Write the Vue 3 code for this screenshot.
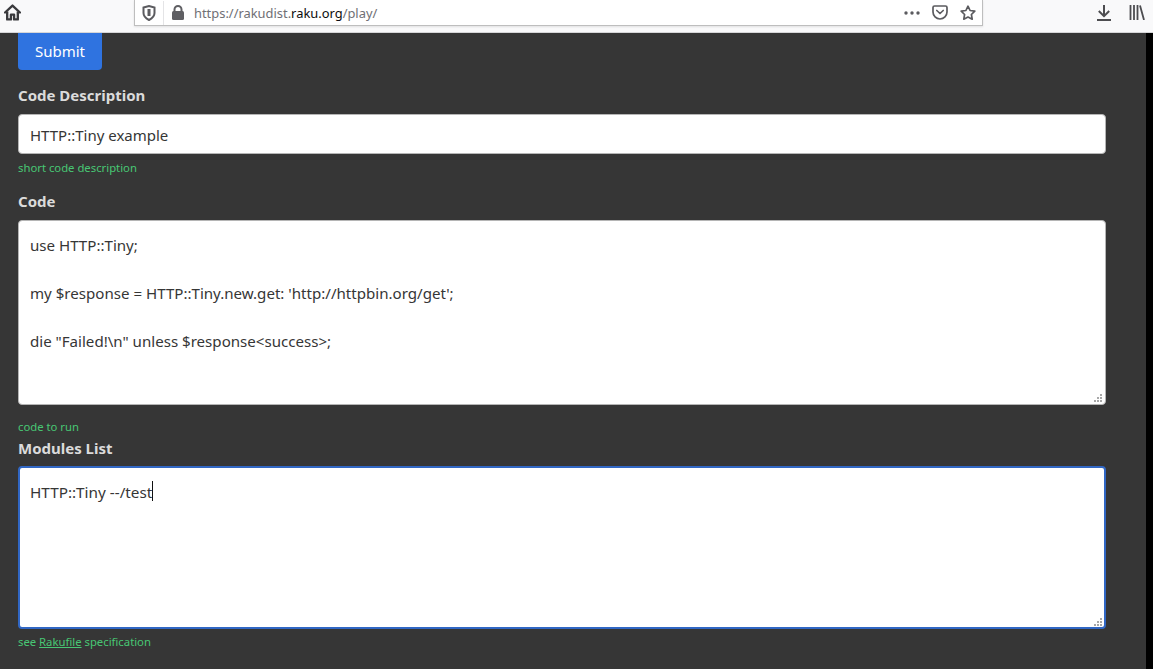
<script setup>
const description = 'HTTP::Tiny example'
const code = `use HTTP::Tiny;

my $response = HTTP::Tiny.new.get: 'http://httpbin.org/get';

die "Failed!\\n" unless $response<success>;`
const modules = 'HTTP::Tiny --/test'
const gripDots = [[6, 0], [3, 3], [6, 3], [0, 6], [3, 6], [6, 6]]
</script>

<template>
  <div class="window">
    <header class="toolbar">
      <svg class="home" width="17" height="17" viewBox="0 0 16 16" fill="none" stroke="#3a3a3d" stroke-width="2.200" stroke-linejoin="round">
        <path d="M1 8 8 1.500 15 8" stroke-linecap="round"/>
        <path d="M3 7v7.500h3.500V10h3v4.500H13V7"/>
      </svg>
      <div class="urlbar">
        <svg class="shield" width="14" height="16" viewBox="0 0 14 16" fill="none" stroke="#5b5b5f" stroke-width="2">
          <path d="M1.500 2.500 7 1l5.500 1.500V8c0 3-2.500 5.500-5.500 7C4 13.500 1.500 11 1.500 8z"/>
          <path d="M7 4v7" stroke-width="3"/>
        </svg>
        <span class="sep"></span>
        <svg class="lock" width="14" height="15" viewBox="0 0 14 15">
          <path fill="none" stroke="#5f5f63" stroke-width="2" d="M3.500 7V4.500a3.500 3.500 0 0 1 7 0V7"/>
          <rect x="1" y="6" width="12" height="9" rx="1.500" fill="#5f5f63"/>
        </svg>
        <span class="url">https://rakudist.<b>raku.org</b>/play/</span>
        <span class="spacer"></span>
        <svg class="dots" width="16" height="4" viewBox="0 0 16 4" fill="#5b5b5f">
          <circle cx="2" cy="2" r="1.700"/><circle cx="8" cy="2" r="1.700"/><circle cx="14" cy="2" r="1.700"/>
        </svg>
        <svg class="pocket" width="16" height="15" viewBox="0 0 16 15" fill="none" stroke="#5b5b5f" stroke-width="1.700">
          <path d="M1 2.500A1.500 1.500 0 0 1 2.500 1h11A1.500 1.500 0 0 1 15 2.500V7a7 7 0 0 1-14 0z"/>
          <path d="m4.800 5.500 3.200 3 3.200-3" stroke-linecap="round" stroke-linejoin="round"/>
        </svg>
        <svg class="star" width="16" height="15" viewBox="0 0 16 15" fill="none" stroke="#5b5b5f" stroke-width="1.700" stroke-linejoin="round">
          <path d="m8 1.200 2.100 4.300 4.700.7-3.400 3.300.8 4.700L8 12l-4.200 2.200.8-4.700L1.200 6.200l4.700-.7z"/>
        </svg>
      </div>
      <span class="spacer"></span>
      <svg class="download" width="14" height="16" viewBox="0 0 14 16" fill="none" stroke="#4d4d50" stroke-width="2">
        <path d="M7 0v11M1.800 6 7 11.200 12.200 6M0 15h14"/>
      </svg>
      <svg class="library" width="16" height="15" viewBox="0 0 16 15" fill="none" stroke="#4d4d50" stroke-width="1.800">
        <path d="M1.500 0v15M5 0v15M8.500 0v15M11 .5 15 15"/>
      </svg>
    </header>

    <div class="viewport">
      <main class="page">
        <button class="submit" type="button">Submit</button>

        <section class="field description">
          <label>Code Description</label>
          <input class="control" type="text" :value="description" />
          <p class="help">short code description</p>
        </section>

        <section class="field code">
          <label>Code</label>
          <div class="area-wrap">
            <textarea class="control area code-area" :value="code"></textarea>
            <svg class="grip" width="8" height="8" viewBox="0 0 8 8">
              <rect v-for="d in gripDots" :key="d.join()" :x="d[0]" :y="d[1]" width="2" height="2" fill="#a8a8a8" />
            </svg>
          </div>
          <p class="help">code to run</p>
        </section>

        <section class="field modules">
          <label>Modules List</label>
          <div class="area-wrap">
            <textarea class="control area modules-area" :value="modules"></textarea>
            <span class="caret"></span>
            <svg class="grip" width="8" height="8" viewBox="0 0 8 8">
              <rect v-for="d in gripDots" :key="d.join()" :x="d[0]" :y="d[1]" width="2" height="2" fill="#a8a8a8" />
            </svg>
          </div>
          <p class="help">see <a href="#">Rakufile</a> specification</p>
        </section>
      </main>
      <div class="strip"></div>
    </div>
  </div>
</template>

<style>
html, body { margin: 0; height: 100%; overflow: hidden; }
</style>

<style scoped>
.window {
  width: 1153px;
  height: 669px;
  display: flex;
  flex-direction: column;
  overflow: hidden;
  font-family: "Noto Sans", "Open Sans", sans-serif;
}
.toolbar {
  height: 32px;
  flex: none;
  display: flex;
  align-items: flex-start;
  background: #f9f9fa;
  border-bottom: 1px solid #d6d6d8;
}
.home { margin: 4px 0 0 4px; flex: none; }
.urlbar {
  width: 849px;
  height: 26px;
  margin-left: 113px;
  flex: none;
  display: flex;
  align-items: center;
  background: #fff;
  border: solid #bebebe;
  border-width: 0 1px 1px 1px;
  box-sizing: border-box;
  box-shadow: 0 1px 2px rgba(0,0,0,.1);
}
.shield { margin-left: 7px; }
.sep { width: 1px; height: 24px; background: #e4e4e6; margin-left: 7px; }
.lock { margin-left: 7px; }
.url {
  margin-left: 9px;
  font-size: 12.900px;
  color: #6f6f75;
  white-space: nowrap;
}
.url b { font-weight: 400; color: #0c0c0d; }
.spacer { flex: 1; }
.dots { margin-right: 12px; }
.pocket { margin-right: 12px; }
.star { margin-right: 6px; }
.download { margin: 5px 18px 0 0; }
.library { margin: 5px 8px 0 0; }

.viewport {
  flex: 1;
  min-height: 0;
  display: flex;
  background: #000;
}
.page {
  flex: 1;
  background: #363636;
  padding: 0 40px 0 18px;
  color: #dbdbdb;
}
.submit {
  display: block;
  width: 84px;
  height: 37px;
  margin: 0;
  padding: 0 0 2px;
  border: 0;
  border-radius: 0 0 4px 4px;
  background: #2f73e0;
  color: #fff;
  font: 400 15px "Noto Sans", sans-serif;
}
.strip { width: 7px; flex: none; }

.field { display: flex; flex-direction: column; }
.field label {
  font-size: 15px;
  font-weight: 700;
  line-height: 24px;
  color: #dbdbdb;
}
.description { margin-top: 13px; }
.description label { margin-bottom: 7px; }
.code { margin-top: 13px; }
.code label { margin-bottom: 7px; }
.modules { margin-top: 1px; }
.modules label { margin-bottom: 6px; }

.control {
  display: block;
  box-sizing: border-box;
  width: 1088px;
  border: 1px solid #b5b5b5;
  border-radius: 4px;
  background: #fff;
  color: #363636;
  font: 400 15px/24px "Noto Sans", sans-serif;
  padding: 7px 11px;
  margin: 0;
  outline: none;
}
input.control { height: 40px; padding-top: 9px; padding-bottom: 7px; }
.area { resize: none; overflow: hidden; padding: 12px 11px; }
.code-area { height: 185px; font-size: 15.100px; }
.modules-area {
  border: 2px solid #3167c4;
  padding: 12px 10px;
  font-size: 15.300px;
  height: 163px;
}
.area-wrap { position: relative; width: 1088px; }
.caret {
  position: absolute;
  left: 134px;
  top: 15px;
  width: 1px;
  height: 20px;
  background: #111;
}
.grip {
  position: absolute;
  right: 4px;
  bottom: 3px;
}
.help {
  margin: 0;
  font-size: 11.300px;
  line-height: 16px;
  color: #48c774;
}
.description .help { margin-top: 6px; }
.code .help { margin-top: 14px; }
.modules .help { margin-top: 5px; }
.help a { color: #48c774; text-decoration: underline; }
</style>
